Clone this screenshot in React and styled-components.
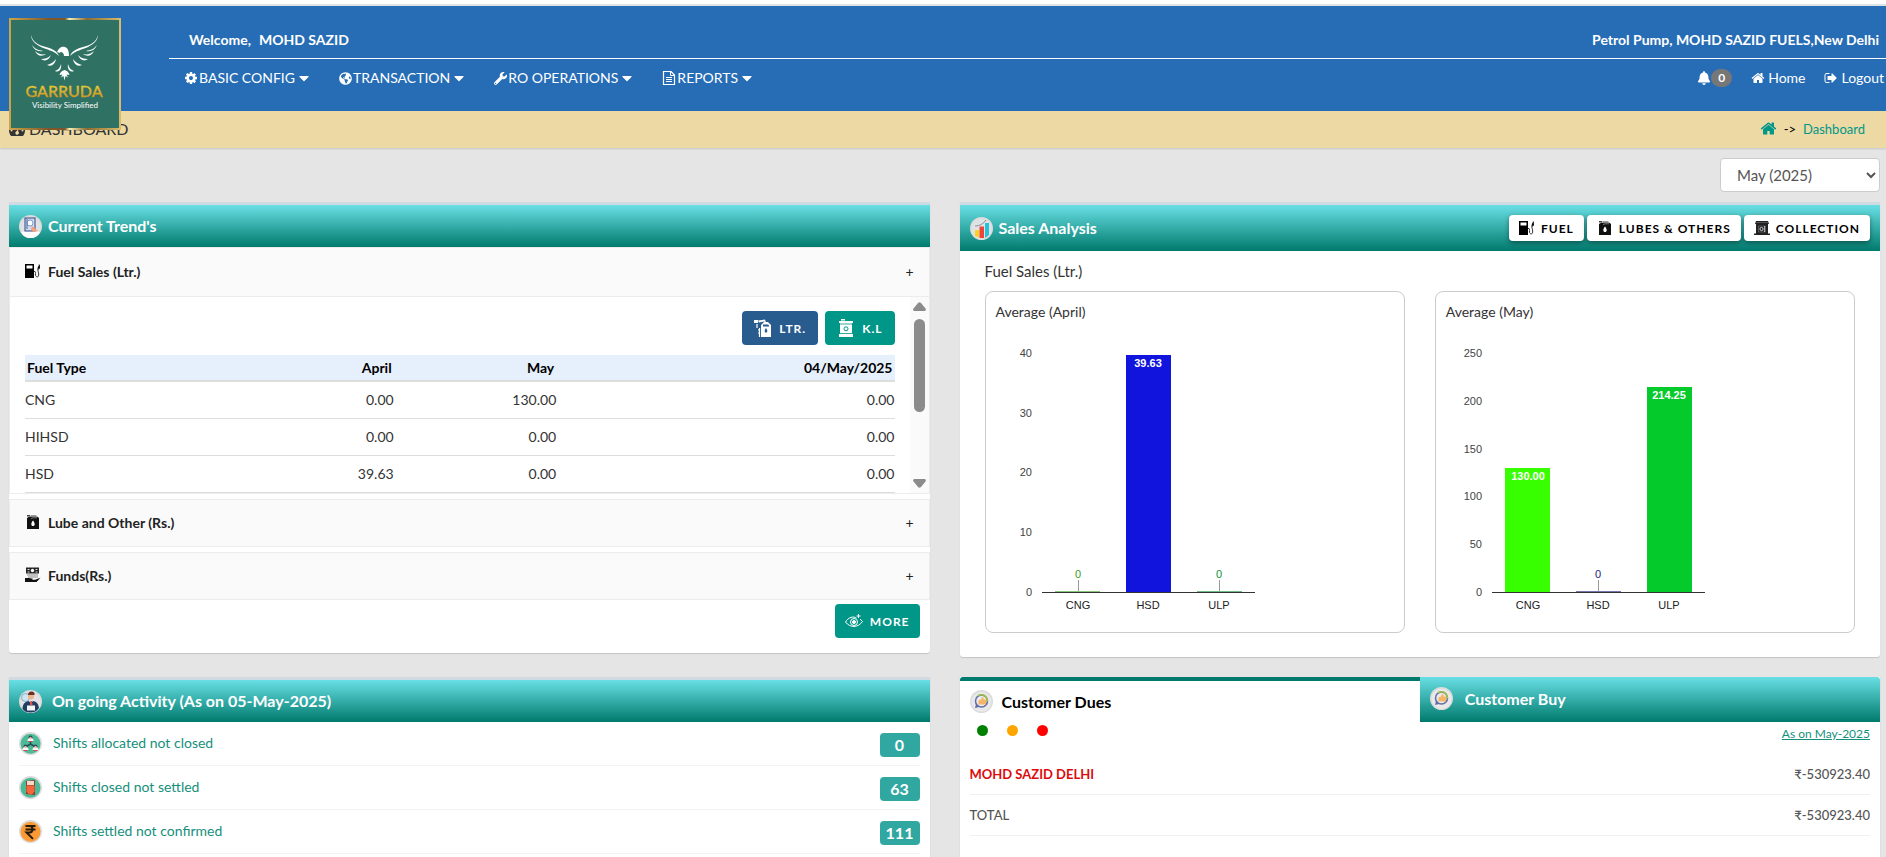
import React, {useState} from 'react'
import styled, {createGlobalStyle} from 'styled-components'
import {FaWrench, FaBell, FaGlobeAmericas, FaCaretDown} from 'react-icons/fa'

const GlobalStyle = createGlobalStyle`
    *{
        box-sizing:border-box;
    }
    body{
        margin:0;
        background:#e5e5e5;
        font-family:Lato, "Liberation Sans", sans-serif;
        font-size:14px;
        line-height:20px;
        color:#333;
    }
    button, select{
        font-family:inherit;
    }
    a{
        text-decoration:none;
    }
    svg{
        display:block;
        flex:none;
    }
`

const Page = styled.div`
    min-height:100vh;
    display:flex;
    flex-direction:column;
    border-top:4px solid #fff;
`

/* ---------- header ---------- */

const Header = styled.header`
    position:relative;
    border-top:2px solid #dde5e5;
    background:#276db6;
    color:#fff;
    padding-left:169px;
    height:107px;
`
const LogoLink = styled.a`
    position:absolute;
    left:9px;
    top:12px;
    z-index:2;
`
const WelcomeRow = styled.div`
    display:flex;
    justify-content:space-between;
    align-items:center;
    height:53px;
    padding:16px 7px 0 20px;
    border-bottom:1px solid #fff;
    font-weight:700;
`
const UserName = styled.span`
    margin-left:8px;
`
const NavRow = styled.nav`
    display:flex;
    justify-content:space-between;
    padding:9px 2px 0 15px;
`
const NavGroup = styled.div`
    display:flex;
    align-items:center;
    gap:${props => props.$gap}px;
`
const NavButton = styled.button`
    display:flex;
    align-items:center;
    gap:1px;
    padding:0;
    border:0;
    background:none;
    color:#fff;
    font-size:14px;
    line-height:20px;
`
const NavLink = styled.a`
    display:flex;
    align-items:center;
    gap:${props => props.$tight ? 0 : 3}px;
    color:#fff;
`
const Count = styled.span`
    padding:0 7px;
    border-radius:10px;
    background:#777;
    font-size:12px;
    font-weight:700;
    line-height:18px;
`

/* ---------- title bar + filter ---------- */

const TitleBar = styled.div`
    display:flex;
    justify-content:space-between;
    align-items:center;
    height:37px;
    padding:0 21px 2px 9px;
    background:#ecd9a4;
    box-shadow:0 1px 2px rgba(0,0,0,0.15);
`
const PageTitle = styled.h1`
    display:flex;
    align-items:center;
    gap:4px;
    margin:0;
    font-size:16px;
    font-weight:400;
    color:#333;
`
const Crumbs = styled.div`
    display:flex;
    align-items:center;
    gap:7px;
    font-size:13px;
    color:#000;
    & a{
        color:#009688;
    }
`
const FilterRow = styled.div`
    display:flex;
    justify-content:flex-end;
    padding:10px 6px;
`
const MonthSelect = styled.select`
    width:160px;
    height:34px;
    padding:0 12px;
    border:1px solid #ccc;
    border-radius:4px;
    background:#fff;
    font-size:15px;
    color:#555;
`

/* ---------- panels ---------- */

const Board = styled.main`
    flex:1;
    display:grid;
    grid-template-columns:minmax(0, 1fr) minmax(0, 1fr);
    grid-template-rows:auto 1fr;
    gap:20px 30px;
    padding:0 6px 0 9px;
`
const Panel = styled.section`
    align-self:${props => props.$fill ? 'stretch' : 'start'};
    border-radius:0 0 ${props => props.$fill ? '0 0' : '3px 3px'};
    border-top:${props => props.$plain ? '0' : '3px solid #cfdae2'};
    background:#fff;
    box-shadow:0 1px 1px rgba(0,0,0,0.15);
`
const PanelHead = styled.div`
    display:flex;
    align-items:center;
    gap:${props => props.$gap || 6}px;
    height:${props => props.$tall ? 46 : 42}px;
    padding:0 10px;
    background:linear-gradient(#69dfe5, #007a6c);
    & h2{
        margin:0;
        font-size:16px;
        font-weight:700;
        color:#fff;
    }
`
const HeadButtons = styled.div`
    display:flex;
    gap:3px;
    margin-left:auto;
`
const HeadButton = styled.button`
    display:flex;
    align-items:center;
    gap:6px;
    height:26px;
    padding:0 10px;
    border:0;
    border-radius:4px;
    background:#fff;
    box-shadow:0 2px 5px rgba(0,0,0,0.4);
    color:#000;
    font-size:12px;
    font-weight:700;
    letter-spacing:1px;
    text-transform:uppercase;
`
const ActionButton = styled.button`
    display:flex;
    align-items:center;
    gap:7px;
    height:34px;
    padding:0 ${props => props.$wide ? 12 : 10}px;
    border:0;
    border-radius:4px;
    background:${props => props.$blue ? '#285c8e' : '#009688'};
    color:#fff;
    font-size:12px;
    font-weight:700;
    letter-spacing:1px;
    text-transform:uppercase;
`

const AccordionHead = styled.button`
    display:flex;
    align-items:center;
    gap:7px;
    width:100%;
    height:${props => props.$first ? 50 : 48}px;
    margin-top:${props => props.$first ? 0 : 5}px;
    padding:0 15px 2px;
    border:1px solid #ececec;
    background:#fafafa;
    color:#222;
    font-size:14px;
    font-weight:700;
    text-align:left;
`
const Plus = styled.span`
    margin-left:auto;
    font-weight:400;
`
const AccordionBody = styled.div`
    display:flex;
    height:197px;
    border:1px solid #ececec;
    border-top:0;
    overflow:hidden;
`
const ScrollArea = styled.div`
    flex:1;
    padding:14px 15px 0;
`
const ScrollTrack = styled.div`
    display:flex;
    flex-direction:column;
    align-items:center;
    width:19px;
    padding:5px 0;
    background:#fafafa;
`
const ScrollThumb = styled.div`
    width:11px;
    height:93px;
    margin:8px 0 auto;
    border-radius:6px;
    background:#8b8b8b;
`
const UnitButtons = styled.div`
    display:flex;
    justify-content:flex-end;
    gap:7px;
    margin-bottom:10px;
`
const MoreRow = styled.div`
    display:flex;
    justify-content:flex-end;
    padding:4px 10px 15px;
`
const FuelTable = styled.table`
    width:100%;
    border-collapse:collapse;
    table-layout:fixed;
    text-align:right;
    & th{
        height:26px;
        padding:0 2px;
        background:#e6effc;
        border-bottom:2px solid #ddd;
        color:#000;
        font-weight:700;
    }
    & td{
        height:37px;
        padding:0;
        border-bottom:1px solid #ddd;
    }
    & th:first-child, & td:first-child{
        text-align:left;
    }
`

/* ---------- charts ---------- */

const ChartBody = styled.div`
    padding:9px 25px 24px;
    & h3{
        margin:0 0 9px;
        font-size:15px;
        font-weight:400;
        line-height:22px;
    }
`
const ChartGrid = styled.div`
    display:grid;
    grid-template-columns:1fr 1fr;
    gap:30px;
`
const ChartCard = styled.figure`
    margin:0;
    height:342px;
    padding:10px;
    border:1px solid #ccc;
    border-radius:8px;
`
const ChartTitle = styled.figcaption`
    font-size:14px;
`
const ChartSvg = styled.svg`
    font-family:"Liberation Sans", Arial, sans-serif;
    font-size:11px;
`

/* ---------- activity ---------- */

const ActivityList = styled.ul`
    margin:0;
    padding:0 10px;
    list-style:none;
`
const ActivityItem = styled.li`
    display:flex;
    align-items:center;
    gap:11px;
    height:44px;
    border-bottom:1px solid #f3f3f3;
    & a{
        flex:1;
        padding-bottom:2px;
        color:#168f7c;
    }
`
const ActivityCount = styled.span`
    width:40px;
    margin-top:2px;
    border-radius:4px;
    background:#30a8a1;
    color:#fff;
    font-size:16px;
    font-weight:700;
    line-height:24px;
    text-align:center;
`

/* ---------- customers ---------- */

const Tabs = styled.div`
    display:grid;
    grid-template-columns:1fr 1fr;
`
const Tab = styled.button`
    display:flex;
    align-items:center;
    gap:${props => props.$active ? 9 : 12}px;
    height:45px;
    padding:0 10px ${props => props.$active ? 0 : 3}px;
    border:0;
    border-top:${props => props.$active ? '4px solid #007a6c' : '0'};
    border-radius:${props => props.$active ? '3px 0 0 0' : '0 3px 0 0'};
    background:${props => props.$active ? '#fff' : 'linear-gradient(#69dfe5, #007a6c)'};
    color:${props => props.$active ? '#000' : '#fff'};
    font-size:16px;
    font-weight:700;
`
const LegendRow = styled.div`
    display:flex;
    justify-content:space-between;
    height:32px;
    padding:2px 10px 0 17px;
    & a{
        font-size:12px;
        color:#168f7c;
        text-decoration:underline;
    }
`
const Dots = styled.div`
    display:flex;
    gap:19px;
    padding-top:1px;
`
const Dot = styled.span`
    width:11px;
    height:11px;
    border-radius:50%;
    background:${props => props.$color};
`
const DuesRow = styled.div`
    display:flex;
    justify-content:space-between;
    align-items:center;
    height:41px;
    margin:0 10px;
    border-bottom:1px solid #f0f0f0;
    color:#555;
    font-size:13px;
    font-weight:500;
`
const Customer = styled.span`
    color:#dd0b0b;
    font-weight:700;
`

/* ---------- drawings ---------- */

const GlyphIcon = ({d, width = 14}) => (
    <svg width={width} height={width} viewBox="0 0 1792 1792" fill="currentColor"><path d={d}/></svg>
)
const homePath = 'M1472 992v480q0 26-19 45t-45 19h-384v-384h-256v384h-384q-26 0-45-19t-19-45v-480q0-1 .5-3t.5-3l575-474 575 474q1 2 1 6zm223-69l-62 74q-8 9-21 11h-3q-13 0-21-7l-692-577-692 577q-12 8-24 7-13-2-21-11l-62-74q-8-10-7-23.5t11-21.5l719-599q32-26 76-26t76 26l244 204v-195q0-14 9-23t23-9h192q14 0 23 9t9 23v408l219 182q10 8 11 21.5t-7 23.5z'
const logoutPath = 'M704 1440q0 4 1 20t.5 26.5-3 23.5-10 19.5-20.5 6.5h-320q-119 0-203.5-84.5t-84.5-203.5v-704q0-119 84.5-203.5t203.5-84.5h320q13 0 22.5 9.5t9.5 22.5q0 4 1 20t.5 26.5-3 23.5-10 19.5-20.5 6.5h-320q-66 0-113 47t-47 113v704q0 66 47 113t113 47h312l11.5 1 11.5 3 8 5.5 7 9 2 13.5zm928-544q0 26-19 45l-544 544q-19 19-45 19t-45-19-19-45v-288h-448q-26 0-45-19t-19-45v-384q0-26 19-45t45-19h448v-288q0-26 19-45t45-19 45 19l544 544q19 19 19 45z'
const cogPath = 'M1152 896q0-106-75-181t-181-75-181 75-75 181 75 181 181 75 181-75 75-181zm512-109v222q0 12-8 23t-20 13l-185 28q-19 54-39 91 35 50 107 138 10 12 10 25t-9 23q-27 37-99 108t-94 71q-12 0-26-9l-138-108q-44 23-91 38-16 136-29 186-7 28-36 28h-222q-14 0-24.5-8.5t-11.5-21.5l-28-184q-49-16-90-37l-141 107q-10 9-25 9-14 0-25-11-126-114-165-168-7-10-7-23 0-12 8-23 15-21 51-66.5t54-70.5q-27-50-41-99l-183-27q-13-2-21-12.5t-8-23.5v-222q0-12 8-23t19-13l186-28q14-46 39-92-40-57-107-138-10-12-10-24 0-10 9-23 26-36 98.5-107.5t94.5-71.5q13 0 26 10l138 107q44-23 91-38 16-136 29-186 7-28 36-28h222q14 0 24.5 8.5t11.5 21.5l28 184q49 16 90 37l142-107q9-9 24-9 13 0 25 10 129 119 165 170 7 8 7 22 0 12-8 23-15 21-51 66.5t-54 70.5q26 50 41 98l183 28q13 2 21 12.5t8 23.5z'

const FileIcon = () => (
    <svg width="14" height="14" viewBox="0 0 14 14" fill="none" stroke="currentColor">
        <path d="M1.500.5H9L12.500 4v9.500h-11z" strokeWidth="1.200"/>
        <path d="M8.500.5v4h4M4 6.500h6M4 8.500h6M4 10.500h6"/>
    </svg>
)
const GaugeIcon = () => (
    <svg width="16" height="14" viewBox="0 0 16 14">
        <path d="M8 0c4.400 0 8 3.600 8 8 0 2-.5 3.700-1.400 5.200-.3.500-.7.8-1.200.8H2.600c-.5 0-.9-.3-1.200-.8C.5 11.700 0 10 0 8c0-4.400 3.600-8 8-8z" fill="#333"/>
        <g fill="#ecd9a4">
            <circle cx="2.500" cy="8.500" r="1"/>
            <circle cx="4" cy="4.500" r="1"/>
            <circle cx="8" cy="2.500" r="1"/>
            <circle cx="12" cy="4.500" r="1"/>
            <circle cx="13.500" cy="8.500" r="1"/>
            <path d="M9 5l1 .3-1 4a1.800 1.800 0 1 1-1-.2z"/>
        </g>
    </svg>
)

const Logo = () => (
    <svg width="112" height="112" viewBox="0 0 112 112">
        <defs>
            <linearGradient id="frame" x1="0" x2="1">
                <stop offset="0" stopColor="#cda349"/>
                <stop offset="0.35" stopColor="#80562a"/>
                <stop offset="0.5" stopColor="#80562a"/>
                <stop offset="0.54" stopColor="#f7efb5"/>
                <stop offset="0.7" stopColor="#8d6a31"/>
                <stop offset="1" stopColor="#d9bb6a"/>
            </linearGradient>
            <linearGradient id="gold" x1="0" y1="0" x2="0" y2="1">
                <stop offset="0" stopColor="#f0dc3c"/>
                <stop offset="1" stopColor="#c98a1e"/>
            </linearGradient>
        </defs>
        <rect x="1" y="1" width="110" height="110" fill="#2f7264" stroke="url(#frame)" strokeWidth="2"/>
        <g fill="#fff">
            <path d="M22 17c2 8 8 10 15 12 7 2 11 4 13 9-6-6-12-6-18-9-6-3-10-7-10-12z"/>
            <path d="M89 17c-2 8-8 10-15 12-7 2-11 4-13 9 6-6 12-6 18-9 6-3 10-7 10-12z"/>
            <path d="M48 34c2-4 4-6 8-5 3 1 4 4 4 9h-5c0-3-2-4-3-4-1 0-1 1-1 1z"/>
            <path d="M23 27c3 4 6 5 11 6-5 1-9-1-11-6zM26 33c3 3 7 4 11 3-4 3-9 2-11-3zM32 41c4 0 7-1 10-4-2 5-6 7-10 4zM38 47c4-1 7-3 9-6-1 5-4 8-9 6zM46 53c3-1 5-3 6-7 1 5-2 9-6 7z"/>
            <path d="M88 27c-3 4-6 5-11 6 5 1 9-1 11-6zM85 33c-3 3-7 4-11 3 4 3 9 2 11-3zM79 41c-4 0-7-1-10-4 2 5 6 7 10 4zM73 47c-4-1-7-3-9-6 1 5 4 8 9 6zM65 53c-3-1-5-3-6-7-1 5 2 9 6 7z"/>
            <path d="M55.500 52q4 1 5 5l-3-.5 1.500 3-2.500-1.500-1 4.500-1-4.500-2.500 1.500 1.500-3-3 .5q1-4 5-5z"/>
        </g>
        <text x="55" y="79" textAnchor="middle" fontFamily="Lato, sans-serif" fontSize="16" fontWeight="500" fill="url(#gold)" stroke="url(#gold)" strokeWidth="0.3">GARRUDA</text>
        <text x="56" y="90" textAnchor="middle" fontFamily="Lato, sans-serif" fontSize="8" fill="#fff">Visibility Simplified</text>
    </svg>
)

const PumpIcon = () => (
    <svg width="16" height="16" viewBox="0 0 16 16">
        <path d="M0 1h9v14H0z" fill="#000"/>
        <path d="M1.5 2.500h6v3h-6z" fill="#fff"/>
        <path d="M9 8.500c2-.5 1.500 1.500 1.500 3.500s3 3 3.200 0-1.600-5-.7-7 1.500-2 1.200-3.500" fill="none" stroke="#333" strokeWidth="1"/>
        <path d="M13 4l1.600-2.400.4 3.400-1.400 2z" fill="#000"/>
    </svg>
)
const CanIcon = () => (
    <svg width="16" height="16" viewBox="0 0 16 16">
        <path d="M2 4l2-1.200h8.500L14 4v11H2z" fill="#111"/>
        <path d="M2 1h3v1.500H2zM5.500 1.500h6v1h-6z" fill="#444"/>
        <path d="M6 4.500L8 3.800h4" stroke="#999" strokeWidth="0.8" fill="none"/>
        <path d="M8 6.500c2.500 3 2 5.500 0 5.500s-2.500-2.500 0-5.500z" fill="#fff"/>
    </svg>
)
const FundsIcon = () => (
    <svg width="16" height="16" viewBox="0 0 16 16">
        <path d="M1 .5h13v6H1z" fill="#222"/>
        <path d="M2.500 2h2v1h-2zM10.500 2h2v1h-2zM2.500 4.500h2v1h-2zM10.500 4.500h2v1h-2z" fill="#ddd"/>
        <circle cx="7.500" cy="3.500" r="1.700" fill="#fff"/>
        <path d="M2 7.500h11v1H2zM3 9.500h10v1H3z" fill="#888"/>
        <path d="M0 11h4l4 .8-1 1h3l5.500-2-4 4.200H0z" fill="#111"/>
    </svg>
)
const SafeIcon = () => (
    <svg width="16" height="16" viewBox="0 0 16 16">
        <path d="M2 1h12l1 3H1zM2 3.500h12V14H2zM0 13.500h16V15H0z" fill="#222"/>
        <path d="M2 2.500h12M4.500 6h7v6h-7z" stroke="#777" strokeWidth="0.6" fill="none"/>
        <circle cx="7.500" cy="9" r="1.600" fill="none" stroke="#eee" strokeWidth="0.8"/>
        <path d="M10.500 6v6" stroke="#ccc" strokeWidth="0.800"/>
    </svg>
)
const OilIcon = () => (
    <svg width="18" height="18" viewBox="0 0 18 18" fill="#fff">
        <path d="M0 1h4v3H0zM4 1.500l7-1 1 3-2-1-5 1zM7 6l3-3h4l3 3v12H7z"/>
        <path d="M3 5v4M5.500 9v9M4 11h2M4 14h2" stroke="#fff" strokeWidth="1.200"/>
        <path d="M9 5.500h5l1 1v1H9z" fill="#285c8e"/>
        <path d="M12 9c2 2.500 1.500 4.500 0 4.500S10 11.500 12 9z" fill="#285c8e"/>
    </svg>
)
const BarrelIcon = () => (
    <svg width="18" height="18" viewBox="0 0 18 18">
        <path d="M2 2h14v2h-1v11h1v3H2v-3h1V4H2zM4 0h4v1.500H4z" fill="#fff"/>
        <path d="M3 5h12M3 14.500h12" stroke="#009688" strokeWidth="0.8"/>
        <circle cx="9" cy="9.800" r="2" fill="none" stroke="#009688"/>
    </svg>
)
const EyeIcon = () => (
    <svg width="18" height="14" viewBox="0 0 18 14" fill="none" stroke="#fff" strokeWidth="1">
        <path d="M.5 8c3-5 8-6 11-4M17.500 7.500C13 14 5 14 .5 8M15 5l2.500 2.500"/>
        <circle cx="9" cy="8" r="3.500"/>
        <circle cx="9" cy="8" r="1.500" fill="#fff"/>
        <path d="M13.500 0v4M11.500 2h4"/>
    </svg>
)

const Round = ({fill = '#dfe3e6', children}) => (
    <svg width="23" height="23" viewBox="0 0 23 23">
        <circle cx="11.500" cy="11.500" r="11.500" fill="#dcdcdc"/>
        <circle cx="11.500" cy="11.800" r="10" fill={fill}/>
        {children}
    </svg>
)
const TrendIcon = () => (
    <Round>
        <path d="M2 17q9-2 19 0-3 6-9.500 6T2 17z" fill="#fff"/>
        <rect x="6" y="3" width="10" height="13" fill="#cfdcf0" stroke="#34477c"/>
        <circle cx="11" cy="8" r="3" fill="#fff" stroke="#7f9bd0"/>
        <path d="M8 4v10" stroke="#4c69a8"/>
        <path d="M13 11l6 5-5 1-2-3z" fill="#f2a27d"/>
    </Round>
)
const ChartIcon = () => (
    <Round>
        <path d="M5 13h4v7.500L5 19z" fill="#ffd21f"/>
        <path d="M9.500 9.500h4.500V21H9.500z" fill="#ee4438"/>
        <path d="M15 6h4v12l-4 3z" fill="#22c3dd"/>
        <path d="M5 9q7 0 11-6" fill="none" stroke="#777" strokeWidth="0.8"/>
    </Round>
)
const PersonIcon = () => (
    <Round fill="#e6e2ea">
        <circle cx="6.500" cy="7.500" r="4" fill="#cfe6f2" stroke="#7ab0c8"/>
        <circle cx="12" cy="6.500" r="3" fill="#f0b48c"/>
        <path d="M9 5q0-3.500 3.500-3.500T15.500 5z" fill="#6b3025"/>
        <path d="M3.500 19q0-7 6-8l2.500 2 2-2q5.500 1 6 7-3 4.500-8.500 4.500T3.500 19z" fill="#243e63"/>
        <path d="M11.300 11h1.600l.6 4h-2.600z" fill="#e35343"/>
        <rect x="8" y="15.500" width="8" height="5" fill="#f4f5f7"/>
    </Round>
)
const TeamIcon = () => (
    <Round fill="#4dba97">
        <path d="M11.500 9v4M11.500 12l-5 3M11.500 12l5 3" stroke="#23515a" strokeWidth="1.500"/>
        {[[11.5, 6.5], [6.5, 15.5], [16.5, 15.5]].map(([x, y]) => (
            <g key={x}>
                <circle cx={x} cy={y - 1} r="2" fill="#283c50"/>
                <path d={`M${x - 3} ${y + 2.5}q0-3 3-3t3 3z`} fill="#fff"/>
                <circle cx={x} cy={y - 0.5} r="1.200" fill="#f3b9a0"/>
                <path d={`M${x - 2} ${y + 3}h4`} stroke="#d9464a"/>
            </g>
        ))}
    </Round>
)
const DispenserIcon = () => (
    <Round fill="#4dba97">
        <path d="M7 5l9-1v15l-9-1z" fill="#9a3d2c"/>
        <rect x="8" y="5" width="7" height="4" fill="#f7d9c9"/>
        <path d="M7.500 9.500h8v6q-2 3-4 3t-4-3z" fill="#f4673a"/>
    </Round>
)
const RupeeIcon = () => (
    <Round fill="#fb9a35">
        <path d="M6.500 6h10M6.500 9.500h10M6.500 6h4q3 0 3 3.200t-3 3.200H7.500l6.500 6.500" fill="none" stroke="#231a10" strokeWidth="2"/>
    </Round>
)
const ThumbIcon = () => (
    <Round fill="#e9e9ea">
        <circle cx="11.500" cy="11" r="6" fill="none" stroke="#5f6ca6" strokeWidth="1.500"/>
        <path d="M8 5.500q8-3 9.500 6" fill="none" stroke="#a3c04b" strokeWidth="1.600"/>
        <path d="M5 18l1-4 3 3z" fill="#5f6ca6"/>
        <path d="M8.500 10.500l2.500-1 1-2.500q2 0 1.500 2.500h2.500v5H8.500z" fill="#f4b566"/>
    </Round>
)
const Arrow = ({down}) => (
    <svg width="13" height="9" viewBox="0 0 13 9">
        <path d={down ? 'M1 0h11q1.500 1 .5 2.500L8 8q-1.500 1.500-3 0L.5 2.500Q-.5 1 1 0z' : 'M1 9h11q1.500-1 .5-2.500L8 1Q6.500-.5 5 1L.5 6.500Q-.5 8 1 9z'} fill="#8b8b8b"/>
    </svg>
)

/* ---------- data ---------- */

const menus = [
    {label: 'BASIC CONFIG', icon: <GlyphIcon d={cogPath}/>},
    {label: 'TRANSACTION', icon: <FaGlobeAmericas size={13}/>},
    {label: 'RO OPERATIONS', icon: <FaWrench size={13}/>},
    {label: 'REPORTS', icon: <FileIcon/>},
]
const fuels = [
    ['CNG', '0.00', '130.00', '0.00'],
    ['HIHSD', '0.00', '0.00', '0.00'],
    ['HSD', '39.63', '0.00', '0.00'],
]
const charts = [
    {
        title: 'Average (April)', max: 40, step: 10,
        bars: [
            {name: 'CNG', value: 0, text: '0', color: '#37a11c'},
            {name: 'HSD', value: 39.63, text: '39.63', color: '#1014dc'},
            {name: 'ULP', value: 0, text: '0', color: '#0f8f3a'},
        ],
    },
    {
        title: 'Average (May)', max: 250, step: 50,
        bars: [
            {name: 'CNG', value: 130, text: '130.00', color: '#37ff00'},
            {name: 'HSD', value: 0, text: '0', color: '#1a1a80'},
            {name: 'ULP', value: 214.25, text: '214.25', color: '#04ca2c'},
        ],
    },
]
const activities = [
    {label: 'Shifts allocated not closed', count: 0, icon: <TeamIcon/>},
    {label: 'Shifts closed not settled', count: 63, icon: <DispenserIcon/>},
    {label: 'Shifts settled not confirmed', count: 111, icon: <RupeeIcon/>},
]

const BarChart = ({max, step, bars}) => {
    const bottom = 270
    const plot = 239
    const ticks = []
    for (let t = 0; t <= max; t += step) ticks.push(t)
    return (
        <ChartSvg width="300" height="298" viewBox="0 0 300 298">
            {ticks.map(t => (
                <text key={t} x="36" y={bottom + 4 - Math.round(t / max * plot)} textAnchor="end" fill="#444">{t}</text>
            ))}
            {bars.map((bar, i) => {
                const center = 82 + i * 71
                const labelX = center - (i > 0 ? 1 : 0)
                const height = Math.round(bar.value / max * plot)
                return (
                    <g key={bar.name}>
                        {height > 0
                            ? <rect x={center - 23} y={bottom - height} width="45" height={height} fill={bar.color}/>
                            : <>
                                <path d={`M${center - 23} ${bottom - 0.5}h45`} stroke={bar.color} strokeOpacity="0.6"/>
                                <path d={`M${labelX + 0.5} ${bottom - 12}v11`} stroke="#999"/>
                            </>}
                        <text
                            x={labelX}
                            y={height > 0 ? bottom - height + 12 : bottom - 14}
                            textAnchor="middle"
                            fontWeight={height > 0 ? 700 : 400}
                            fill={height > 0 ? '#fff' : bar.color}
                        >{bar.text}</text>
                        <text x={labelX} y={bottom + 17} textAnchor="middle" fill="#222">{bar.name}</text>
                    </g>
                )
            })}
            <path d={`M46 ${bottom + 0.5}h213`} stroke="#333"/>
        </ChartSvg>
    )
}

const App = () => {
    const [month, setMonth] = useState('May (2025)')
    return (
        <Page>
            <GlobalStyle/>
            <Header>
                <LogoLink href="#" aria-label="Garruda"><Logo/></LogoLink>
                <WelcomeRow>
                    <span>Welcome,<UserName>MOHD SAZID</UserName></span>
                    <span>Petrol Pump, MOHD SAZID FUELS,New Delhi</span>
                </WelcomeRow>
                <NavRow>
                    <NavGroup $gap={27}>
                        {menus.map(m => (
                            <NavButton key={m.label} type="button">{m.icon}{m.label}<FaCaretDown size={16}/></NavButton>
                        ))}
                    </NavGroup>
                    <NavGroup $gap={19}>
                        <NavLink href="#" $tight><FaBell size={14}/><Count>0</Count></NavLink>
                        <NavLink href="#"><GlyphIcon d={homePath}/>Home</NavLink>
                        <NavLink href="#"><GlyphIcon d={logoutPath}/>Logout</NavLink>
                    </NavGroup>
                </NavRow>
            </Header>
            <TitleBar>
                <PageTitle><GaugeIcon/>DASHBOARD</PageTitle>
                <Crumbs>
                    <a href="#" aria-label="Home"><GlyphIcon d={homePath} width={17}/></a>
                    <span>-&gt;</span>
                    <a href="#">Dashboard</a>
                </Crumbs>
            </TitleBar>
            <FilterRow>
                <MonthSelect aria-label="Month" value={month} onChange={e => setMonth(e.target.value)}>
                    <option>April (2025)</option>
                    <option>May (2025)</option>
                </MonthSelect>
            </FilterRow>
            <Board>
                <Panel>
                    <PanelHead><TrendIcon/><h2>Current Trend's</h2></PanelHead>
                    <AccordionHead type="button" $first><PumpIcon/>Fuel Sales (Ltr.)<Plus>+</Plus></AccordionHead>
                    <AccordionBody>
                        <ScrollArea>
                            <UnitButtons>
                                <ActionButton type="button" $blue $wide><OilIcon/>Ltr.</ActionButton>
                                <ActionButton type="button" $wide><BarrelIcon/>K.L</ActionButton>
                            </UnitButtons>
                            <FuelTable>
                                <colgroup>
                                    <col width="24%"/>
                                    <col width="18.4%"/>
                                    <col width="18.7%"/>
                                    <col width="38.9%"/>
                                </colgroup>
                                <thead>
                                    <tr><th>Fuel Type</th><th>April</th><th>May</th><th>04/May/2025</th></tr>
                                </thead>
                                <tbody>
                                    {fuels.map(row => (
                                        <tr key={row[0]}>{row.map((cell, i) => <td key={i}>{cell}</td>)}</tr>
                                    ))}
                                </tbody>
                            </FuelTable>
                        </ScrollArea>
                        <ScrollTrack>
                            <Arrow/>
                            <ScrollThumb/>
                            <Arrow down/>
                        </ScrollTrack>
                    </AccordionBody>
                    <AccordionHead type="button"><CanIcon/>Lube and Other (Rs.)<Plus>+</Plus></AccordionHead>
                    <AccordionHead type="button"><FundsIcon/>Funds(Rs.)<Plus>+</Plus></AccordionHead>
                    <MoreRow>
                        <ActionButton type="button"><EyeIcon/>More</ActionButton>
                    </MoreRow>
                </Panel>

                <Panel>
                    <PanelHead $tall>
                        <ChartIcon/><h2>Sales Analysis</h2>
                        <HeadButtons>
                            <HeadButton type="button"><PumpIcon/>Fuel</HeadButton>
                            <HeadButton type="button"><CanIcon/>Lubes &amp; Others</HeadButton>
                            <HeadButton type="button"><SafeIcon/>Collection</HeadButton>
                        </HeadButtons>
                    </PanelHead>
                    <ChartBody>
                        <h3>Fuel Sales (Ltr.)</h3>
                        <ChartGrid>
                            {charts.map(c => (
                                <ChartCard key={c.title}>
                                    <ChartTitle>{c.title}</ChartTitle>
                                    <BarChart {...c}/>
                                </ChartCard>
                            ))}
                        </ChartGrid>
                    </ChartBody>
                </Panel>

                <Panel $fill>
                    <PanelHead $gap={10}><PersonIcon/><h2>On going Activity (As on 05-May-2025)</h2></PanelHead>
                    <ActivityList>
                        {activities.map(a => (
                            <ActivityItem key={a.label}>
                                {a.icon}
                                <a href="#">{a.label}</a>
                                <ActivityCount>{a.count}</ActivityCount>
                            </ActivityItem>
                        ))}
                    </ActivityList>
                </Panel>

                <Panel $fill $plain>
                    <Tabs>
                        <Tab type="button" $active><ThumbIcon/>Customer Dues</Tab>
                        <Tab type="button"><ThumbIcon/>Customer Buy</Tab>
                    </Tabs>
                    <LegendRow>
                        <Dots><Dot $color="green"/><Dot $color="orange"/><Dot $color="red"/></Dots>
                        <a href="#">As on May-2025</a>
                    </LegendRow>
                    <DuesRow><Customer>MOHD SAZID DELHI</Customer><span>₹-530923.40</span></DuesRow>
                    <DuesRow><span>TOTAL</span><span>₹-530923.40</span></DuesRow>
                </Panel>
            </Board>
        </Page>
    )
}

export default App
